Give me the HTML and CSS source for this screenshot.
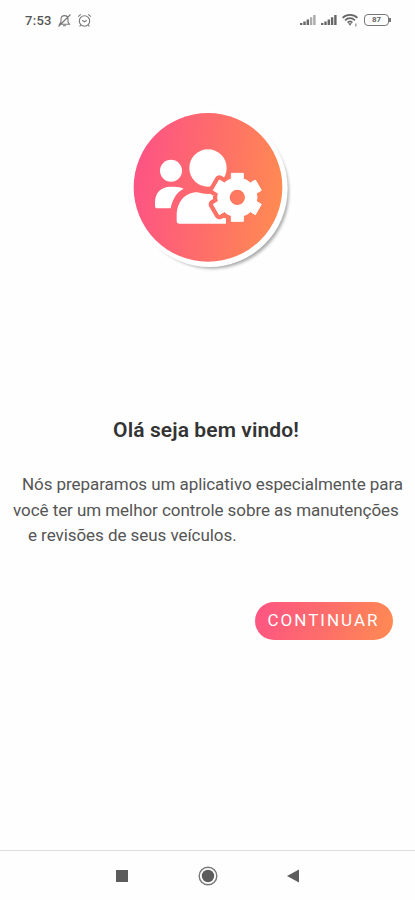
FILE: index.html
```html
<!DOCTYPE html>
<html lang="pt-BR">
<head>
    <meta charset="UTF-8">
    <meta name="viewport" content="width=device-width, initial-scale=1.0">
    <title>Bem vindo</title>
    <link rel="stylesheet" href="styles.css">
</head>
<body>
    <header class="status-bar">
        <div class="status-left">
            <span class="time">7:53</span>
            <svg class="icon-mute" width="15" height="15" viewBox="0 0 15 15" fill="none" stroke="#777" stroke-width="1.1">
                <path d="M2.5 11.2h10L11 9V6.2C11 3.8 9.6 2.6 7.5 2.6S4 3.8 4 6.2V9zM6 12.8h3M1.5 13.5l12-12"/>
            </svg>
            <svg class="icon-alarm" width="15" height="15" viewBox="0 0 15 15" fill="none" stroke="#777" stroke-width="1.1">
                <circle cx="7.5" cy="8" r="5.2"/>
                <path d="M1.2 3.6l2.6-2.2M13.8 3.6l-2.6-2.2M5.2 7.3l2.3 1.6 2.2-1.6M3.8 12l-1.2 1.4M11.2 12l1.2 1.4"/>
            </svg>
        </div>
        <div class="status-right">
            <svg width="16" height="12" viewBox="0 0 16 12" fill="#666">
                <path d="M0 9h2.4v2H0zM3.3 7.5h2.4V11H3.3zM6.6 5.5H9V11H6.6z"/>
                <path d="M9.9 3.2h2.4V11H9.9zM13.2 1h2.4v10h-2.4z" fill="#aaa"/>
            </svg>
            <svg width="16" height="12" viewBox="0 0 16 12" fill="#666">
                <path d="M0 9h2.4v2H0zM3.3 7.5h2.4V11H3.3zM6.6 5.5H9V11H6.6zM9.9 3.2h2.4V11H9.9zM13.2 1h2.4v10h-2.4z"/>
            </svg>
            <svg class="icon-wifi" width="17" height="14" viewBox="0 0 17 14" fill="none" stroke="#666" stroke-width="1.7">
                <path d="M.6 4.8c4-4 10.8-4 14.8 0M3.1 7.3c2.8-2.8 7-2.8 9.8 0M5.6 9.6c1.4-1.4 3.4-1.4 4.8 0"/>
                <path d="M6.2 10.3L8 12.8l1.8-2.5z" fill="#666" stroke="none"/>
                <path d="M13.8 10.5v3" stroke="#aaa"/>
            </svg>
            <div class="battery">87</div>
        </div>
    </header>

    <main class="welcome">
        <svg class="logo" viewBox="0 0 525 540">
            <defs>
                <linearGradient id="brand" gradientUnits="userSpaceOnUse" x1="30" y1="225" x2="475" y2="290">
                    <stop offset="0" stop-color="#fd5484"/>
                    <stop offset="0.5" stop-color="#fe6d6a"/>
                    <stop offset="1" stop-color="#ff8b52"/>
                </linearGradient>
                <filter id="shadow" x="-10%" y="-10%" width="125%" height="125%">
                    <feGaussianBlur stdDeviation="5"/>
                </filter>
                <path id="gear" d="M319 220h36v17q12 3 21 12l15-9 18 31-15 9q4 12 0 24l15 9-18 31-15-9q-9 9-21 12v17h-36v-17q-12-3-21-12l-15 9-18-31 15-9q-4-12 0-24l-15-9 18-31 15 9q9-9 21-12z"/>
            </defs>
            <circle cx="263" cy="277" r="229" fill="#777" opacity=".6" filter="url(#shadow)"/>
            <circle cx="253" cy="266" r="235" fill="#fff"/>
            <circle cx="249" cy="262" r="223" fill="url(#brand)"/>
            <g fill="#fff">
                <circle cx="138" cy="212" r="33"/>
                <path d="M97 325q-7 0-7-8v-10c0-28 18-47 46-47 15 0 28 0 40 6-20 10-33 29-39 59z"/>
                <circle cx="249" cy="204" r="56"/>
                <path d="M163 371q-8 0-8-9v-14c0-42 25-71 62-71q32 10 64 0l22 70v24z"/>
            </g>
            <use href="#gear" fill="url(#brand)" stroke="url(#brand)" stroke-width="28" stroke-linejoin="round"/>
            <use href="#gear" fill="#fff" stroke="#fff" stroke-width="3" stroke-linejoin="round"/>
            <circle cx="337" cy="292" r="23" fill="url(#brand)"/>
        </svg>

        <h1 class="title">Olá seja bem vindo!</h1>

        <p class="message">
            <span class="line line-first">Nós preparamos um aplicativo especialmente para</span>
            <span class="line">você ter um melhor controle sobre as manutenções</span>
            <span class="line line-last">e revisões de seus veículos.</span>
        </p>

        <button type="button" class="btn">CONTINUAR</button>
    </main>

    <nav class="nav-bar">
        <svg width="20" height="20" viewBox="0 0 20 20"><path d="M4 4h12v12H4z" fill="#5c5c5c"/></svg>
        <svg width="20" height="20" viewBox="0 0 20 20">
            <circle cx="10" cy="10" r="8.8" fill="none" stroke="#777" stroke-width="1.4"/>
            <circle cx="10" cy="10" r="6.2" fill="#5c5c5c"/>
        </svg>
        <svg width="20" height="20" viewBox="0 0 20 20"><path d="M3 10l12-6.5v13z" fill="#5c5c5c"/></svg>
    </nav>
</body>
</html>
```
FILE: styles.css
```css
* {
    margin: 0;
    padding: 0;
    box-sizing: border-box;
}

body {
    font-family: Roboto, "Liberation Sans", sans-serif;
    background: #fefefe;
    color: #333;
    height: 900px;
    display: flex;
    flex-direction: column;
    overflow: hidden;
}

svg {
    display: block;
    flex: none;
}

.status-bar {
    height: 40px;
    padding: 0 24px 0 25px;
    display: flex;
    justify-content: space-between;
    align-items: center;
}

.status-left,
.status-right {
    display: flex;
    align-items: center;
}

.status-left {
    gap: 5px;
}

.status-right {
    gap: 5px;
}

.time {
    font-size: 13px;
    font-weight: 500;
    letter-spacing: 0.3px;
    color: #555;
}

.battery {
    position: relative;
    width: 25px;
    height: 12px;
    margin-right: 2px;
    border: 1.5px solid #777;
    border-radius: 4px;
    font-size: 8px;
    font-weight: 700;
    line-height: 10px;
    text-align: center;
    color: #666;
}

.battery::after {
    content: "";
    position: absolute;
    right: -3px;
    top: 3px;
    width: 2px;
    height: 4px;
    background: #777;
}

.welcome {
    flex: 1;
    display: flex;
    flex-direction: column;
    padding: 60px 13px 0;
}

.logo {
    width: 175px;
    height: 180px;
    margin-left: 112px;
}

.title {
    margin-top: 138px;
    font-size: 21px;
    font-weight: 600;
    line-height: 24px;
    letter-spacing: 0.1px;
    text-align: center;
    padding-right: 3px;
}

.message {
    margin-top: 30px;
    font-size: 17px;
    line-height: 25.5px;
    letter-spacing: -0.06px;
    color: #555;
}

.line {
    display: block;
    white-space: nowrap;
}

.line-first {
    padding-left: 9px;
}

.line-last {
    padding-left: 15px;
}

.btn {
    align-self: flex-end;
    width: 138px;
    height: 38px;
    margin: 53px 9px 0 0;
    padding: 0 1px 2px 0;
    border: none;
    border-radius: 19px;
    background: linear-gradient(105deg, #fd5484, #fe6d6a 50%, #ff8b52);
    color: #fff;
    font-family: inherit;
    font-size: 17px;
    letter-spacing: 2px;
    cursor: pointer;
}

.nav-bar {
    height: 50px;
    border-top: 1px solid #ddd;
    display: flex;
    align-items: center;
    justify-content: center;
    gap: 66px;
}
```
